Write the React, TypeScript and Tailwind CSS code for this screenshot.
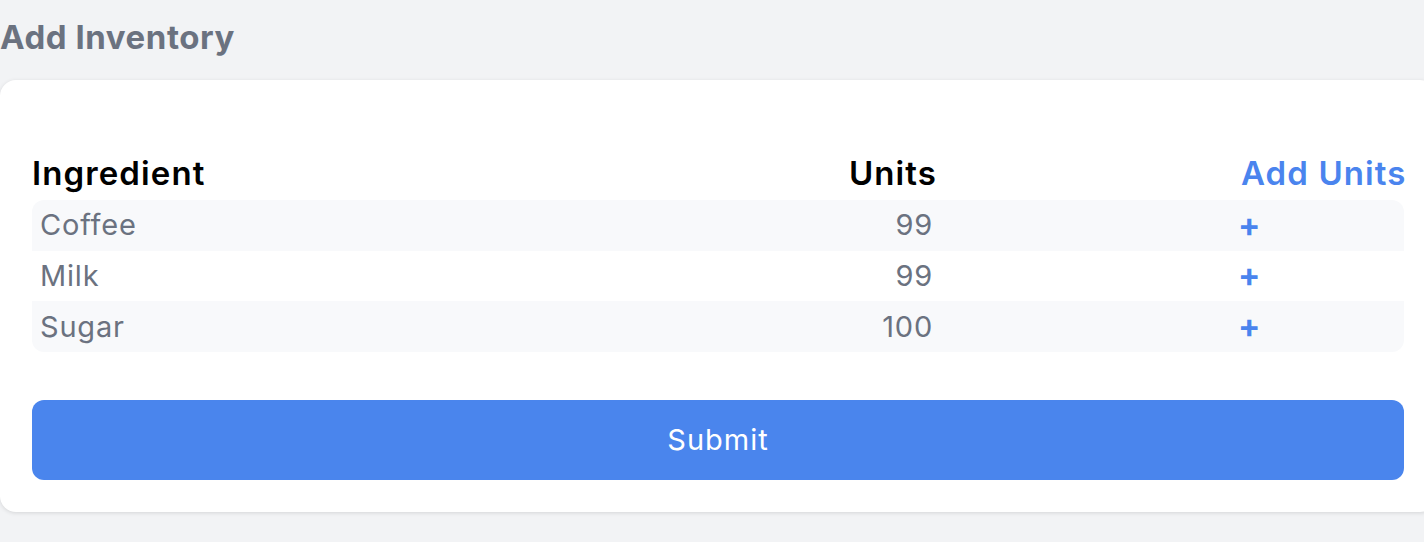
import React from 'react'

// ── Data ──────────────────────────────────────────────────────────────────────

const inventory = [
  { name: 'Coffee', units: 99 },
  { name: 'Milk', units: 99 },
  { name: 'Sugar', units: 100 },
]

const font = { fontFamily: 'Inter, "Noto Sans", sans-serif' }

// ── Component ─────────────────────────────────────────────────────────────────

export default function App() {
  return (
    <div className="min-h-[542px] w-full overflow-hidden bg-[#f2f3f5]" style={font}>
      {/* Title */}
      <h1 className="pt-[17px] h-[57px] text-[33px] leading-[40px] font-bold text-[#6b7280] tracking-[0.55px]">
        Add Inventory
      </h1>

      {/* Card */}
      <div className="mt-[23px] w-[1436px] rounded-2xl bg-white shadow-[0_1px_4px_rgba(0,0,0,0.12)] pl-8 pr-[32px] pt-[69px] pb-8">
        <div className="w-[1372px]">
          {/* Header */}
          <div className="flex items-center h-[51px] pb-[3px] text-[33px] leading-[40px] font-semibold tracking-[1.1px]">
            <div className="flex-1 text-black">Ingredient</div>
            <div className="w-[300px] text-right text-black">Units</div>
            <div className="w-[304px]" />
            <div className="w-[163px] text-[#4a84ee] whitespace-nowrap">Add Units</div>
          </div>

          {/* Rows */}
          <div className="rounded-xl overflow-hidden">
            {inventory.map((item, i) => (
              <div
                key={item.name}
                className={[
                  'flex items-center h-[50.67px] text-[29px] leading-[36px] tracking-[0.8px] text-[#6b7280]',
                  i % 2 === 0 ? 'bg-[#f8f9fb]' : 'bg-white',
                ].join(' ')}
              >
                <div className="flex-1 pl-2">{item.name}</div>
                <div className="w-[300px] text-right pr-[2px]">{item.units}</div>
                <div className="w-[303px]" />
                <div className="w-[166px] text-[33px] font-bold text-[#4a84ee] leading-none">
                  +
                </div>
              </div>
            ))}
          </div>

          {/* Submit */}
          <button className="mt-12 w-full h-20 rounded-xl bg-[#4a85ed] text-white text-[29px] tracking-[1px] font-normal">
            Submit
          </button>
        </div>
      </div>
    </div>
  )
}
